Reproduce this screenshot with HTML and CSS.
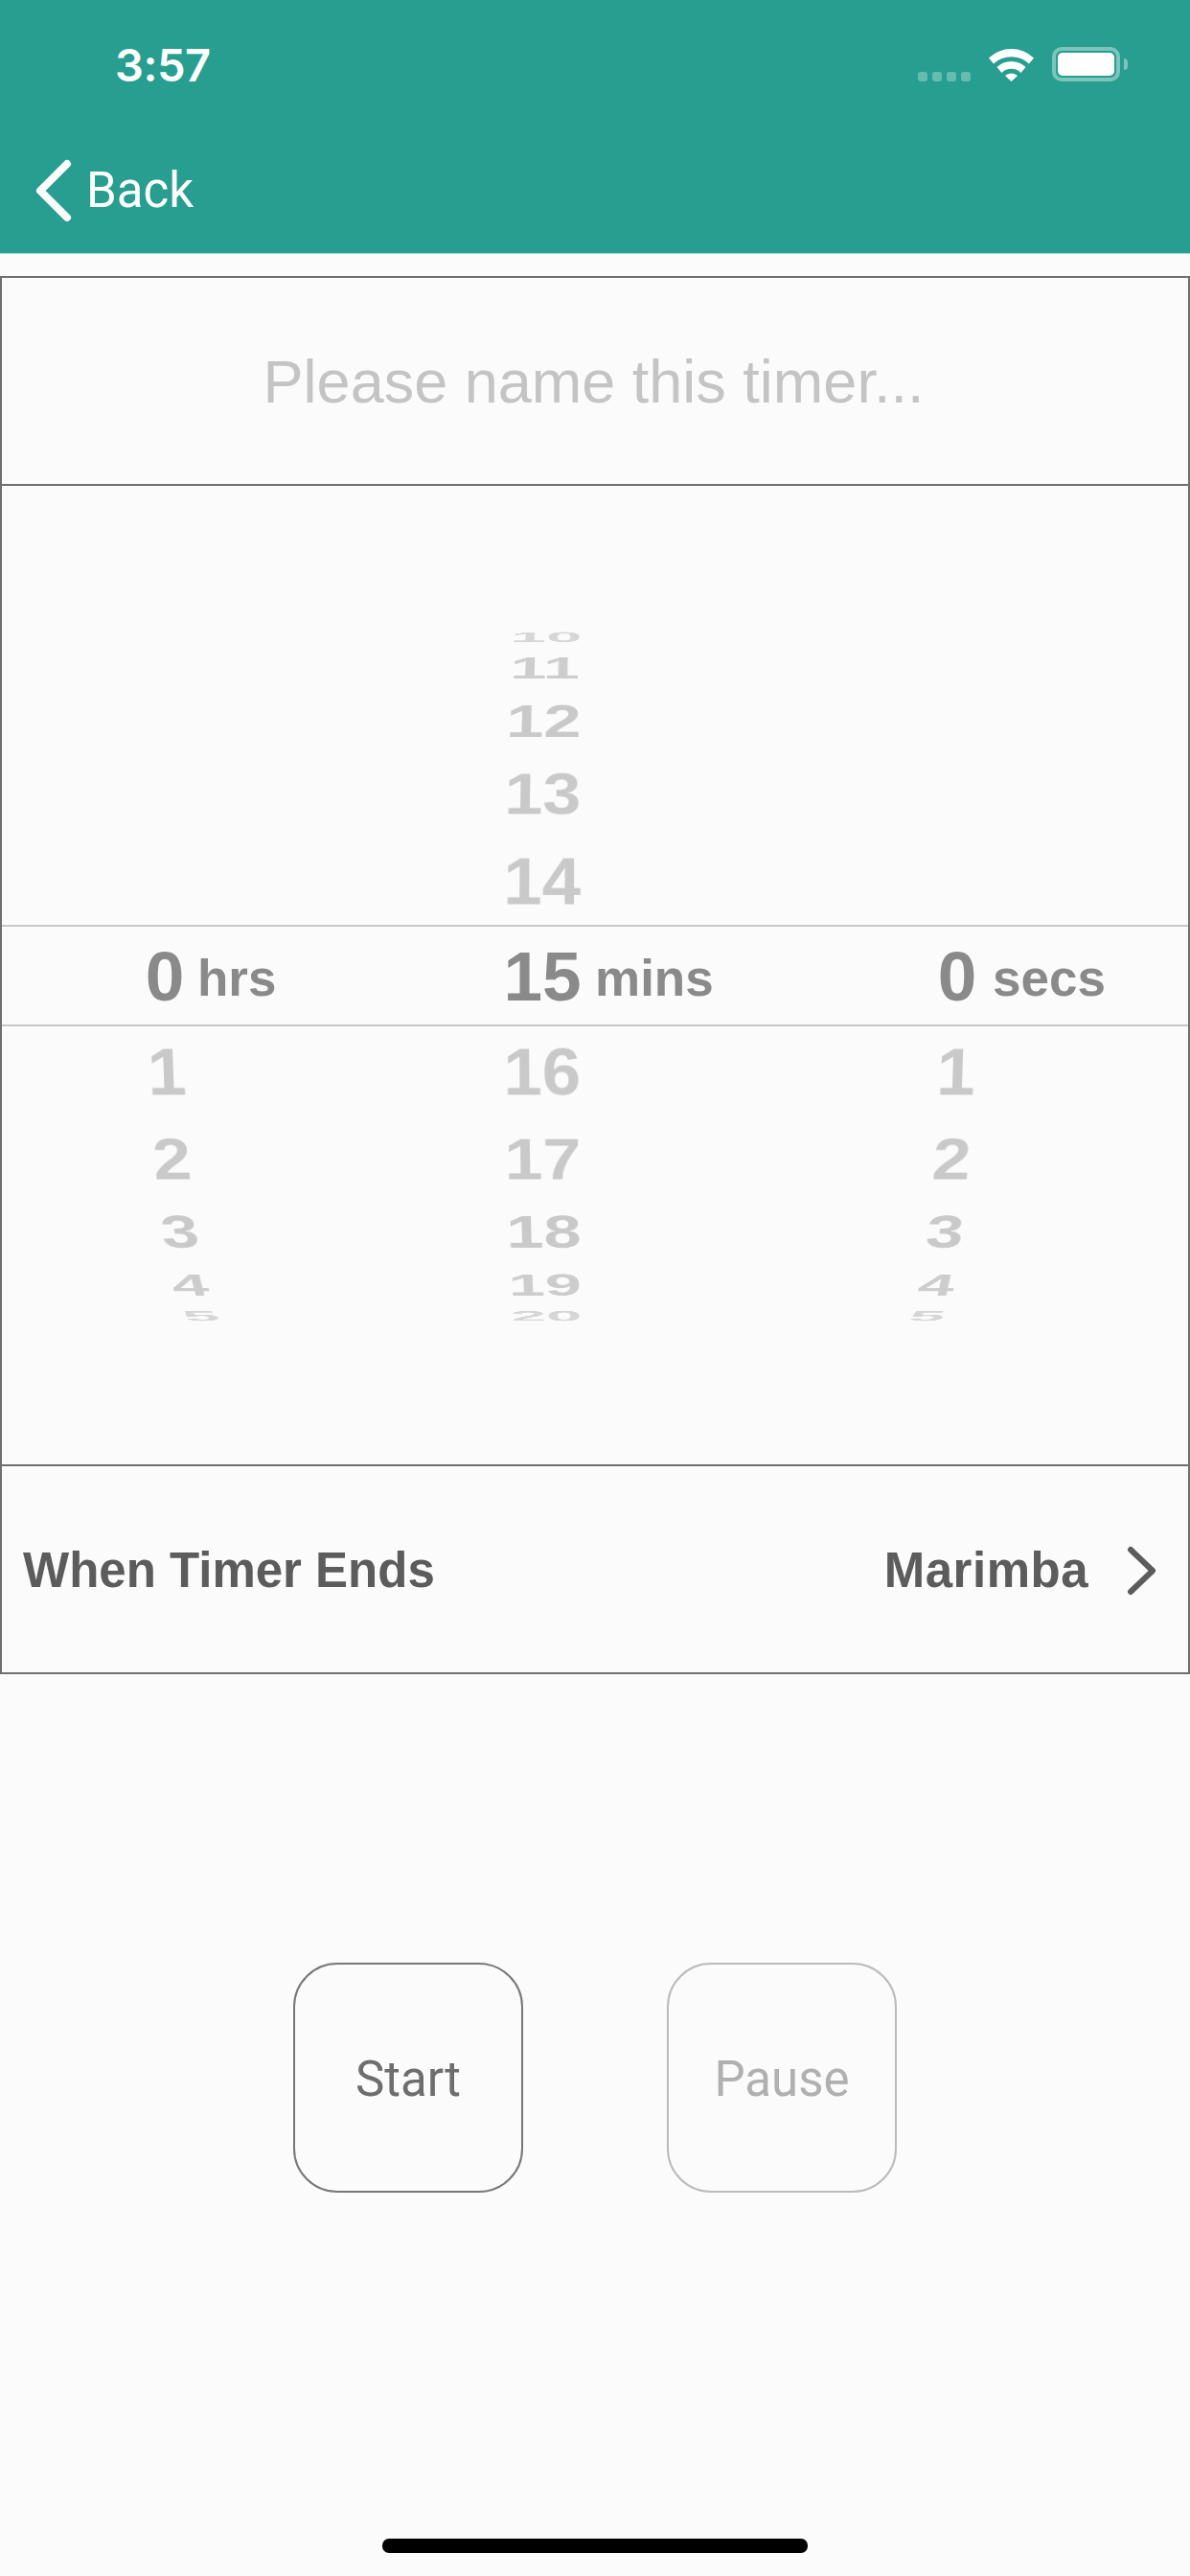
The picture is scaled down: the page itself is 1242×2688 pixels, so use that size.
FILE: index.html
```html
<!DOCTYPE html>
<html lang="en">
<head>
<meta charset="utf-8">
<title>Timer</title>
<link rel="stylesheet" href="styles.css">
</head>
<body>
<div class="screen">
  <header class="header">
    <div class="status">
      <span class="time">3:57</span>
      <div class="status-icons">
        <div class="signal"><i></i><i></i><i></i><i></i></div>
        <svg class="wifi" viewBox="0 0 47 36" width="47" height="36">
          <path d="M0 11.5 A34 34 0 0 1 47 11.5 L42 17.5 A27 27 0 0 0 5 17.5 Z"/>
          <path d="M8.5 21 A21.5 21.5 0 0 1 38.5 21 L33.5 27 A14 14 0 0 0 13.5 27 Z"/>
          <path d="M17 30 A9.5 9.5 0 0 1 30 30 L23.5 36 Z"/>
        </svg>
        <div class="battery"><div class="battery-level"></div></div>
        <div class="battery-tip"></div>
      </div>
    </div>
    <nav class="nav">
      <svg class="back-icon" viewBox="0 0 40 66" width="40" height="66"><path d="M34 5 L6 33 L34 61"/></svg>
      <span class="back-label">Back</span>
    </nav>
  </header>

  <main class="form">
    <div class="name-row">Please name this timer...</div>
    <section class="picker">
      <div class="band"></div>
      <div class="wheel">
        <span class="num hrs sel">0</span>
        <span class="num hrs dn1">1</span>
        <span class="num hrs dn2">2</span>
        <span class="num hrs dn3">3</span>
        <span class="num hrs dn4">4</span>
        <span class="num hrs dn5">5</span>
        <span class="num hrs dn6">6</span>
        <span class="unit unit-hrs">hrs</span>

        <span class="num mins up5">10</span>
        <span class="num mins up4">11</span>
        <span class="num mins up3">12</span>
        <span class="num mins up2">13</span>
        <span class="num mins up1">14</span>
        <span class="num mins sel">15</span>
        <span class="num mins dn1">16</span>
        <span class="num mins dn2">17</span>
        <span class="num mins dn3">18</span>
        <span class="num mins dn4">19</span>
        <span class="num mins dn5">20</span>
        <span class="num mins dn6">21</span>
        <span class="unit unit-mins">mins</span>

        <span class="num secs sel">0</span>
        <span class="num secs dn1">1</span>
        <span class="num secs dn2">2</span>
        <span class="num secs dn3">3</span>
        <span class="num secs dn4">4</span>
        <span class="num secs dn5">5</span>
        <span class="num secs dn6">6</span>
        <span class="unit unit-secs">secs</span>
      </div>
    </section>
    <div class="sound-row">
      <span>When Timer Ends</span>
      <div class="sound-value">
        <span class="sound-name">Marimba</span>
        <svg class="chevron" viewBox="0 0 32 52" width="32" height="52"><path d="M4 4 L27 26 L4 48"/></svg>
      </div>
    </div>
  </main>

  <div class="actions">
    <button class="round-btn">Start</button>
    <button class="round-btn disabled">Pause</button>
  </div>

  <div class="home-indicator"></div>
</div>
</body>
</html>
```
FILE: styles.css
```css
* { box-sizing: border-box; }
html, body { margin: 0; padding: 0; }
body { background: #fbfbfb; }

.screen {
  width: 1242px;
  height: 2688px;
  display: flex;
  flex-direction: column;
  overflow: hidden;
  font-family: Roboto, "Liberation Sans", sans-serif;
}

/* Header */
.header {
  height: 265px;
  flex: none;
  background: #279e8f;
  border-bottom: 1px solid #a4d3cd;
  color: #fff;
  display: flex;
  flex-direction: column;
}
.status {
  height: 135px;
  display: flex;
  justify-content: space-between;
  padding: 42px 65px 0 120px;
}
.time {
  font: 600 47px/52px Inter, sans-serif;
  letter-spacing: -0.5px;
  height: 52px;
}
.status-icons {
  display: flex;
  align-items: flex-start;
  padding-top: 7px;
}
.signal {
  display: flex;
  gap: 5px;
  margin-top: 26px;
  margin-right: 19px;
}
.signal i {
  display: block;
  width: 10px;
  height: 10px;
  border-radius: 3px;
  background: rgba(255, 255, 255, 0.3);
}
.wifi { fill: #fff; margin-right: 19px; }
.battery {
  width: 71px;
  height: 36px;
  padding: 2px;
  border: 4px solid rgba(255, 255, 255, 0.4);
  border-radius: 10px;
  background-clip: padding-box;
}
.battery-level {
  width: 100%;
  height: 100%;
  background: #fff;
  border-radius: 5px;
}
.battery-tip {
  width: 4px;
  height: 12px;
  margin: 12px 0 0 4px;
  border-radius: 0 4px 4px 0;
  background: rgba(255, 255, 255, 0.4);
}
.nav {
  display: flex;
  align-items: center;
  padding-left: 36px;
  height: 66px;
  margin-top: 31px;
  gap: 14px;
}
.back-icon { fill: none; stroke: #fff; stroke-width: 8; stroke-linecap: round; stroke-linejoin: round; flex: none; }
.back-label { font-size: 51px; font-weight: 400; line-height: 66px; }

/* Form */
.form {
  margin-top: 23px;
  flex: none;
  border: 2px solid #6f6f6f;
}
.name-row {
  height: 215px;
  display: flex;
  align-items: center;
  justify-content: center;
  font: 400 63px "Liberation Sans", Arial, sans-serif;
  color: #c4c4c4;
  padding-right: 3px;
}
.picker {
  height: 1025px;
  position: relative;
  border-top: 2px solid #6f6f6f;
  border-bottom: 2px solid #6f6f6f;
  display: flex;
  align-items: center;
  padding-top: 3px;
}
.band {
  position: absolute;
  left: 0;
  right: 0;
  top: 458px;
  height: 106px;
  border-top: 2px solid #c8c8c8;
  border-bottom: 2px solid #c8c8c8;
}
.wheel {
  width: 100%;
  height: 724px;
  overflow: hidden;
  display: grid;
  grid-template-columns: 340px 448px 418px 1fr;
  grid-template-rows: 1fr;
  perspective: 3000px;
  perspective-origin: 50% 50%;
  align-items: center;
  font-family: "Liberation Sans", Arial, sans-serif;
  font-weight: 700;
}
.num {
  grid-row: 1;
  justify-self: center;
  font-size: 73px;
  line-height: 80px;
  color: #c9c9c9;
  transform: translateZ(-410px) rotateX(calc(var(--k) * 14.1deg)) translateZ(410px);
}
.hrs { grid-column: 1; }
.mins { grid-column: 2; }
.secs { grid-column: 3; }
.sel { --k: 0; color: #8a8a8a; }
.up1 { --k: 1; } .up2 { --k: 2; } .up3 { --k: 3; }
.up4 { --k: 4; color: #cdcdcd; }
.up5 { --k: 5; color: #d6d6d6; }
.dn1 { --k: -1; } .dn2 { --k: -2; } .dn3 { --k: -3; }
.dn4 { --k: -4; color: #cdcdcd; }
.dn5 { --k: -5; color: #d6d6d6; }
.dn6 { --k: -6; color: #e4e4e4; }

.unit {
  grid-row: 1;
  justify-self: start;
  font-size: 53px;
  line-height: 80px;
  color: #8a8a8a;
  margin-top: 4px;
}
.unit-hrs { grid-column: 1; margin-left: 204px; }
.unit-mins { grid-column: 2; margin-left: 279px; }
.unit-secs { grid-column: 3; margin-left: 246px; }

.sound-row {
  height: 215px;
  display: flex;
  align-items: center;
  justify-content: space-between;
  padding: 2px 32px 0 22px;
  font: 700 51px "Liberation Sans", Arial, sans-serif;
  color: #5c5c5c;
}
.sound-value { display: flex; align-items: center; gap: 40px; }
.sound-name { letter-spacing: 0.5px; }
.chevron { fill: none; stroke: #5c5c5c; stroke-width: 6; stroke-linecap: round; stroke-linejoin: round; flex: none; }

/* Buttons */
.actions {
  display: flex;
  justify-content: center;
  gap: 150px;
  margin-top: 301px;
}
.round-btn {
  width: 240px;
  height: 240px;
  padding: 2px 0 0;
  background: transparent;
  border: 2px solid #777;
  border-radius: 46px;
  font: 400 51px Roboto, sans-serif;
  color: #6e6e6e;
}
.round-btn.disabled { border-color: #bbb; color: #b0b0b0; }

.home-indicator {
  width: 444px;
  height: 15px;
  margin: auto auto 24px;
  border-radius: 7px;
  background: #000;
}
```
